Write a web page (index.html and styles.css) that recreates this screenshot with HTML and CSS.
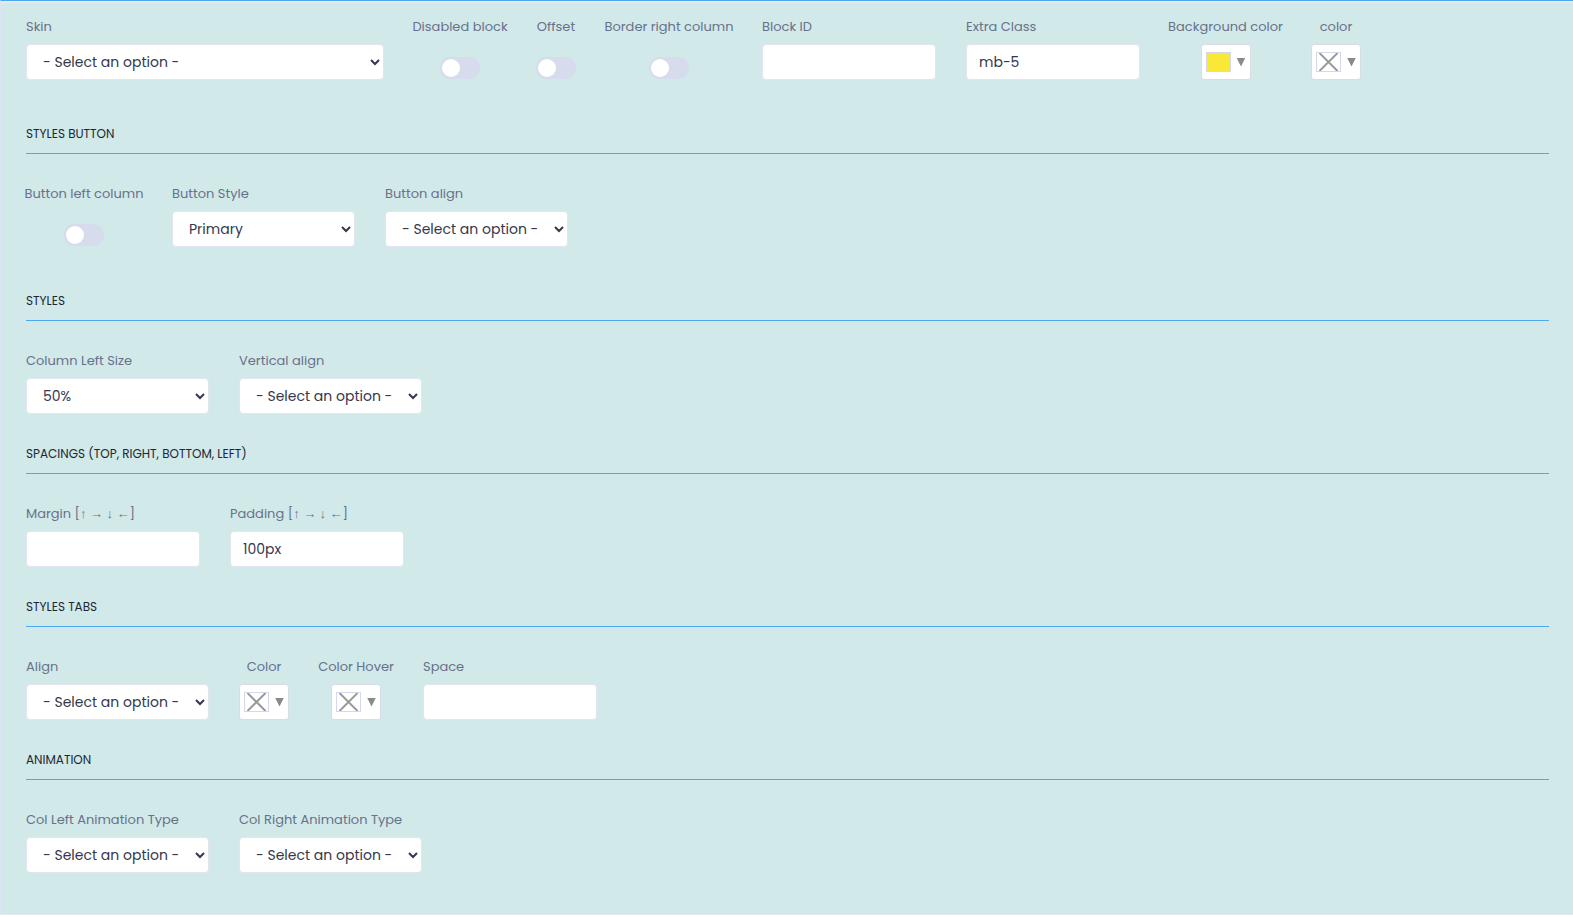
FILE: index.html
```html
<!DOCTYPE html>
<html lang="en">
<head>
<meta charset="utf-8">
<title>Block settings</title>
<link rel="stylesheet" href="styles.css">
</head>
<body>
<form class="panel">
  <section class="group">
    <div class="fields">
      <div class="field"><label for="skin">Skin</label><select id="skin" class="control select wide"><option>- Select an option -</option></select></div>
      <div class="field centered medium"><label for="disabled">Disabled block</label><input id="disabled" class="toggle" type="checkbox"></div>
      <div class="field centered"><label for="offset">Offset</label><input id="offset" class="toggle" type="checkbox"></div>
      <div class="field centered xlarge"><label for="border">Border right column</label><input id="border" class="toggle" type="checkbox"></div>
      <div class="field"><label for="block-id">Block ID</label><input id="block-id" class="control text" type="text"></div>
      <div class="field"><label for="extra">Extra Class</label><input id="extra" class="control text" type="text" value="mb-5"></div>
      <div class="field centered large"><label for="bg">Background color</label><button id="bg" class="picker" type="button"><span class="swatch yellow"></span><span class="arrow"></span></button></div>
      <div class="field centered"><label for="color">color</label><button id="color" class="picker" type="button"><span class="swatch"><svg viewBox="0 0 23 18"><path d="M2.5 0L20.5 18M20.5 0L2.5 18"/></svg></span><span class="arrow"></span></button></div>
    </div>
  </section>

  <section class="group">
    <h2>STYLES BUTTON</h2>
    <div class="fields">
      <div class="field centered larger"><label for="left-col">Button left column</label><input id="left-col" class="toggle" type="checkbox"></div>
      <div class="field"><label for="btn-style">Button Style</label><select id="btn-style" class="control select"><option>Primary</option></select></div>
      <div class="field"><label for="btn-align">Button align</label><select id="btn-align" class="control select"><option>- Select an option -</option></select></div>
    </div>
  </section>

  <section class="group">
    <h2>STYLES</h2>
    <div class="fields">
      <div class="field"><label for="col-size">Column Left Size</label><select id="col-size" class="control select"><option>50%</option></select></div>
      <div class="field"><label for="valign">Vertical align</label><select id="valign" class="control select"><option>- Select an option -</option></select></div>
    </div>
  </section>

  <section class="group">
    <h2>SPACINGS (TOP, RIGHT, BOTTOM, LEFT)</h2>
    <div class="fields">
      <div class="field"><label for="margin">Margin [↑ → ↓ ←]</label><input id="margin" class="control text" type="text"></div>
      <div class="field"><label for="padding">Padding [↑ → ↓ ←]</label><input id="padding" class="control text" type="text" value="100px"></div>
    </div>
  </section>

  <section class="group">
    <h2>STYLES TABS</h2>
    <div class="fields">
      <div class="field"><label for="tab-align">Align</label><select id="tab-align" class="control select"><option>- Select an option -</option></select></div>
      <div class="field centered"><label for="tab-color">Color</label><button id="tab-color" class="picker" type="button"><span class="swatch"><svg viewBox="0 0 23 18"><path d="M2.5 0L20.5 18M20.5 0L2.5 18"/></svg></span><span class="arrow"></span></button></div>
      <div class="field centered small"><label for="tab-hover">Color Hover</label><button id="tab-hover" class="picker" type="button"><span class="swatch"><svg viewBox="0 0 23 18"><path d="M2.5 0L20.5 18M20.5 0L2.5 18"/></svg></span><span class="arrow"></span></button></div>
      <div class="field"><label for="space">Space</label><input id="space" class="control text" type="text"></div>
    </div>
  </section>

  <section class="group">
    <h2>ANIMATION</h2>
    <div class="fields">
      <div class="field"><label for="anim-left">Col Left Animation Type</label><select id="anim-left" class="control select"><option>- Select an option -</option></select></div>
      <div class="field"><label for="anim-right">Col Right Animation Type</label><select id="anim-right" class="control select"><option>- Select an option -</option></select></div>
    </div>
  </section>
</form>
</body>
</html>
```
FILE: styles.css
```css
* { box-sizing: border-box; }
body {
  margin: 0;
  background: #fff;
  font-family: Poppins, "Liberation Sans", sans-serif;
}
.panel {
  border-top: 1px solid #4fa8ef;
  border-left: 1px solid #dce4f7;
  border-bottom: 1px solid #e4e8ee;
  padding: 0 24px 11px 25px;
  background: #d1e9e9;
  box-shadow: inset 0 2px #e4ebf0;
}
.group:first-child { padding-top: 16px; }
h2 {
  margin: 0 0 30px;
  padding-bottom: 9px;
  border-bottom: 1px solid #4fa8ef;
  color: #1d2733;
  font-size: 12px;
  font-weight: 400;
  line-height: 20px;
}
.fields {
  display: flex;
  flex-wrap: wrap;
  gap: 30px;
  padding-bottom: 30px;
}
.field {
  display: flex;
  flex-direction: column;
  align-items: flex-start;
}
.centered { align-items: center; }
.small { width: 74px; }
.medium { width: 92px; }
.large { width: 111px; }
.larger { width: 116px; }
.xlarge { width: 126px; }
label {
  margin-bottom: 7px;
  color: #68718a;
  font-size: 13px;
  line-height: 20px;
  white-space: nowrap;
}
.control {
  height: 36px;
  border: 1px solid #e2e5f1;
  border-radius: 4px;
  background: #fff;
  color: #34384c;
  font: 14px Poppins, "Liberation Sans", sans-serif;
}
.select {
  width: 183px;
  padding: 0 0 0 12px;
}
.wide { width: 358px; }
.text {
  width: 174px;
  padding: 0 12px;
}
.toggle {
  appearance: none;
  display: flex;
  align-items: center;
  width: 40px;
  height: 22px;
  margin: 13px 0 15px;
  padding: 2px;
  border-radius: 11px;
  background: #d6dcec;
}
.toggle::before {
  content: "";
  width: 18px;
  height: 18px;
  border-radius: 50%;
  background: #fff;
}
.toggle:checked { justify-content: flex-end; background: #4fa8ef; }
.picker {
  display: flex;
  align-items: center;
  gap: 6px;
  width: 50px;
  height: 36px;
  padding: 0 4px;
  border: 1px solid #d8dce9;
  border-radius: 3px;
  background: #fff;
}
.swatch {
  width: 25px;
  height: 20px;
  border: 1px solid #d3d9ea;
}
.yellow { background: #f9e936; }
.swatch svg {
  display: block;
  width: 23px;
  height: 18px;
  fill: none;
  stroke: #999;
  stroke-width: 2;
}
.arrow {
  width: 9px;
  height: 9px;
  background: #8a8a8a;
  clip-path: polygon(0 0, 100% 0, 50% 100%);
}
```
